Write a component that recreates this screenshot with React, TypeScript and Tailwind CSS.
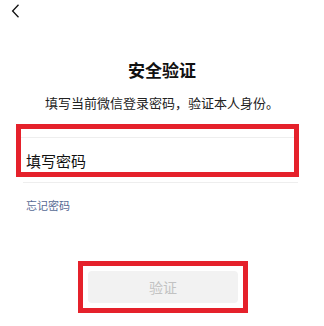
import React from "react";

const App = () => {
    return (
        <div className="w-[324px] h-[326px] bg-white overflow-hidden font-['Noto_Sans_CJK_SC','Noto_Sans',sans-serif]">
            <div className="h-[22px] pl-[11px] pt-[4px]">
                <svg width="9" height="14" viewBox="0 0 9 14" fill="none">
                    <path d="M7.5 0.8 L1.6 7 L7.5 13.2" stroke="#111" strokeWidth="1.3" />
                </svg>
            </div>
            <div className="mt-[36px] text-center text-[17px] leading-[24px] font-bold text-[#111]">安全验证</div>
            <div className="mt-[12px] text-center text-[13px] leading-[18px] text-[#222]">填写当前微信登录密码，验证本人身份。</div>
            <div className="mt-[12px] ml-[16px] w-[283px] h-[53px] border-[5px] border-[#e5212b]">
                <div className="mt-[8px] border-t border-[#eeeeee]" />
                <div className="pt-[13px] pl-[5px] text-[15px] leading-[20px] text-[#111]">填写密码</div>
            </div>
            <div className="mt-[5px] ml-[23px] w-[275px] h-px bg-[#eeeeee]" />
            <div className="mt-[14px] pl-[26px] text-[11px] leading-[16px] text-[#576b95]">忘记密码</div>
            <div className="mt-[48px] ml-[78px] w-[170px] h-[52px] border-[5px] border-[#e5212b] p-[5px]">
                <div className="h-full rounded-[4px] bg-[#f2f2f2] flex items-center justify-center text-[14px] text-[#c2c2c2]">验证</div>
            </div>
        </div>
    );
};

export default App;
